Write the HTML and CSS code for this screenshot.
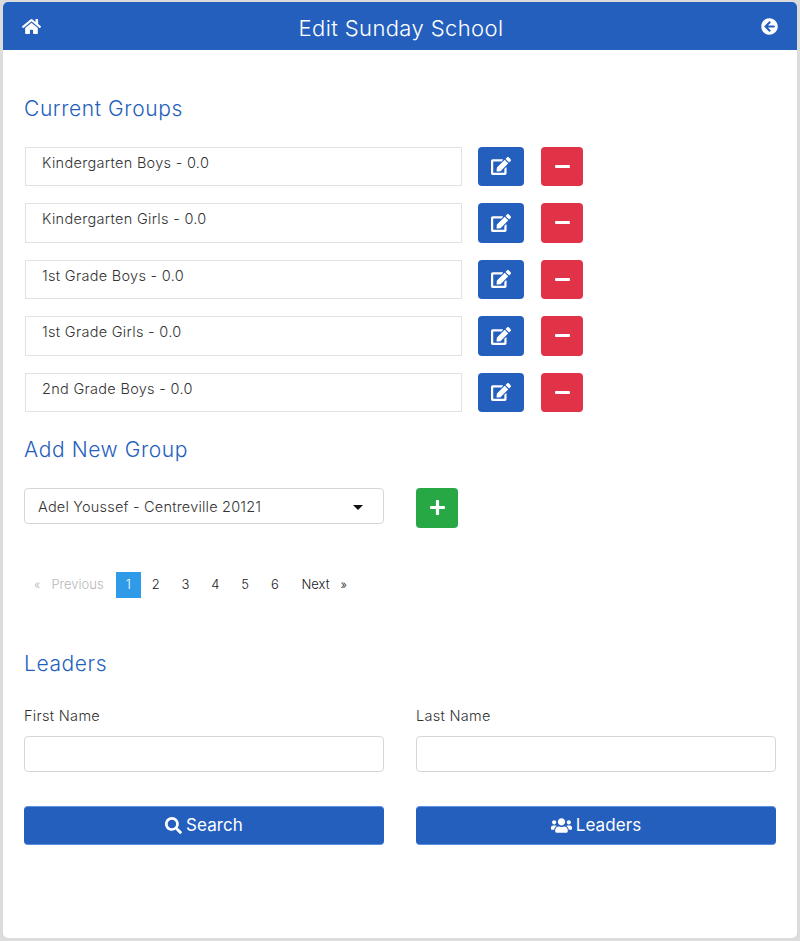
FILE: index.html
```html
<!DOCTYPE html>
<html lang="en">
<head>
<meta charset="utf-8">
<title>Edit Sunday School</title>
<link rel="stylesheet" href="styles.css">
</head>
<body>
<svg class="defs" aria-hidden="true">
  <symbol id="i-home" viewBox="0 0 576 512"><path d="M280.37 148.26L96 300.11V464a16 16 0 0 0 16 16l112.06-.29a16 16 0 0 0 15.92-16V368a16 16 0 0 1 16-16h64a16 16 0 0 1 16 16v95.64a16 16 0 0 0 16 16.05L464 480a16 16 0 0 0 16-16V300L295.67 148.26a12.19 12.19 0 0 0-15.3 0zM571.6 251.47L488 182.56V44.05a12 12 0 0 0-12-12h-56a12 12 0 0 0-12 12v72.61L318.47 43a48 48 0 0 0-61 0L4.34 251.47a12 12 0 0 0-1.6 16.9l25.5 31A12 12 0 0 0 45.15 301l235.22-193.74a12.19 12.19 0 0 1 15.3 0L530.9 301a12 12 0 0 0 16.9-1.6l25.5-31a12 12 0 0 0-1.7-16.93z"/></symbol>
  <symbol id="i-back" viewBox="0 0 512 512"><path d="M256 504C119 504 8 393 8 256S119 8 256 8s248 111 248 248-111 248-248 248zm28.9-143.6L209.4 288H392c13.3 0 24-10.7 24-24v-16c0-13.3-10.7-24-24-24H209.4l75.5-72.4c9.7-9.3 9.9-24.8.4-34.3l-11-10.9c-9.4-9.4-24.6-9.4-33.9 0L107.7 239c-9.4 9.4-9.4 24.6 0 33.9l132.7 132.7c9.4 9.4 24.6 9.4 33.9 0l11-10.9c9.5-9.5 9.3-25-.4-34.3z"/></symbol>
  <symbol id="i-edit" viewBox="0 0 576 512"><path d="M402.6 83.2l90.2 90.2c3.8 3.8 3.8 10 0 13.8L274.4 405.6l-92.8 10.3c-12.4 1.4-22.9-9.1-21.5-21.5l10.3-92.8L388.8 83.2c3.8-3.8 10-3.8 13.8 0zm162-22.9l-48.8-48.8c-15.2-15.2-39.9-15.2-55.2 0l-35.4 35.4c-3.8 3.8-3.8 10 0 13.8l90.2 90.2c3.8 3.8 10 3.8 13.8 0l35.4-35.4c15.2-15.3 15.2-40 0-55.2zM384 346.2V448H64V128h229.8c3.2 0 6.2-1.3 8.5-3.5l40-40c7.6-7.6 2.2-20.5-8.5-20.5H48C21.5 64 0 85.5 0 112v352c0 26.5 21.5 48 48 48h352c26.5 0 48-21.5 48-48V306.2c0-10.7-12.9-16-20.5-8.5l-40 40c-2.2 2.3-3.5 5.3-3.5 8.5z"/></symbol>
  <symbol id="i-minus" viewBox="0 0 448 512"><path d="M416 208H32c-17.67 0-32 14.33-32 32v32c0 17.67 14.33 32 32 32h384c17.67 0 32-14.33 32-32v-32c0-17.67-14.33-32-32-32z"/></symbol>
  <symbol id="i-plus" viewBox="0 0 448 512"><path d="M416 208H272V64c0-17.67-14.33-32-32-32h-32c-17.67 0-32 14.33-32 32v144H32c-17.67 0-32 14.33-32 32v32c0 17.67 14.33 32 32 32h144v144c0 17.67 14.33 32 32 32h32c17.67 0 32-14.33 32-32V304h144c17.67 0 32-14.33 32-32v-32c0-17.67-14.33-32-32-32z"/></symbol>
  <symbol id="i-search" viewBox="0 0 512 512"><path d="M505 442.7L405.3 343c-4.5-4.5-10.6-7-17-7H372c27.6-35.3 44-79.7 44-128C416 93.1 322.9 0 208 0S0 93.1 0 208s93.1 208 208 208c48.3 0 92.7-16.4 128-44v16.3c0 6.4 2.5 12.5 7 17l99.7 99.7c9.4 9.4 24.6 9.4 33.9 0l28.3-28.3c9.4-9.4 9.4-24.6.1-34zM208 336c-70.7 0-128-57.2-128-128 0-70.7 57.2-128 128-128 70.7 0 128 57.2 128 128 0 70.7-57.2 128-128 128z"/></symbol>
  <symbol id="i-users" viewBox="0 0 640 512"><path d="M96 224c35.3 0 64-28.7 64-64s-28.7-64-64-64-64 28.7-64 64 28.7 64 64 64zm448 0c35.3 0 64-28.7 64-64s-28.7-64-64-64-64 28.7-64 64 28.7 64 64 64zm32 32h-64c-17.6 0-33.5 7.1-45.1 18.6 40.3 22.1 68.9 62 75.1 109.4h66c17.7 0 32-14.3 32-32v-32c0-35.3-28.7-64-64-64zm-256 0c61.9 0 112-50.1 112-112S381.9 32 320 32 208 82.1 208 144s50.1 112 112 112zm76.8 32h-8.3c-20.8 10-43.9 16-68.5 16s-47.6-6-68.5-16h-8.3C179.6 288 128 339.6 128 403.2V432c0 26.5 21.5 48 48 48h288c26.5 0 48-21.5 48-48v-28.8c0-63.6-51.6-115.2-115.2-115.2zm-223.7-13.4C161.5 263.1 145.6 256 128 256H64c-35.3 0-64 28.7-64 64v32c0 17.7 14.3 32 32 32h65.9c6.3-47.4 34.9-87.3 75.2-109.4z"/></symbol>
</svg>

<main class="card">
  <header class="topbar">
    <a class="topbar-link" href="#" aria-label="Home"><svg class="icon icon-home"><use href="#i-home"/></svg></a>
    <h1 class="topbar-title">Edit Sunday School</h1>
    <a class="topbar-link" href="#" aria-label="Back"><svg class="icon icon-back"><use href="#i-back"/></svg></a>
  </header>

  <div class="content">
    <h2 class="section-title section-current">Current Groups</h2>
    <ul class="group-list">
      <li class="group-row">
        <div class="group-name">Kindergarten Boys - 0.0</div>
        <button class="btn btn-blue btn-edit" aria-label="Edit"><svg class="icon icon-edit"><use href="#i-edit"/></svg></button>
        <button class="btn btn-red btn-square" aria-label="Remove"><svg class="icon icon-sign"><use href="#i-minus"/></svg></button>
      </li>
      <li class="group-row">
        <div class="group-name">Kindergarten Girls - 0.0</div>
        <button class="btn btn-blue btn-edit" aria-label="Edit"><svg class="icon icon-edit"><use href="#i-edit"/></svg></button>
        <button class="btn btn-red btn-square" aria-label="Remove"><svg class="icon icon-sign"><use href="#i-minus"/></svg></button>
      </li>
      <li class="group-row">
        <div class="group-name">1st Grade Boys - 0.0</div>
        <button class="btn btn-blue btn-edit" aria-label="Edit"><svg class="icon icon-edit"><use href="#i-edit"/></svg></button>
        <button class="btn btn-red btn-square" aria-label="Remove"><svg class="icon icon-sign"><use href="#i-minus"/></svg></button>
      </li>
      <li class="group-row">
        <div class="group-name">1st Grade Girls - 0.0</div>
        <button class="btn btn-blue btn-edit" aria-label="Edit"><svg class="icon icon-edit"><use href="#i-edit"/></svg></button>
        <button class="btn btn-red btn-square" aria-label="Remove"><svg class="icon icon-sign"><use href="#i-minus"/></svg></button>
      </li>
      <li class="group-row">
        <div class="group-name">2nd Grade Boys - 0.0</div>
        <button class="btn btn-blue btn-edit" aria-label="Edit"><svg class="icon icon-edit"><use href="#i-edit"/></svg></button>
        <button class="btn btn-red btn-square" aria-label="Remove"><svg class="icon icon-sign"><use href="#i-minus"/></svg></button>
      </li>
    </ul>

    <h2 class="section-title section-add">Add New Group</h2>
    <div class="two-col add-row">
      <div class="select-box">
        <span class="select-text">Adel Youssef - Centreville 20121</span>
        <span class="select-caret"></span>
      </div>
      <div><button class="btn btn-green btn-square" aria-label="Add"><svg class="icon icon-sign"><use href="#i-plus"/></svg></button></div>
    </div>

    <nav class="pager">
      <span class="page-edge page-disabled"><span class="quote">«</span>Previous</span>
      <span class="page-num page-current">1</span>
      <a class="page-num" href="#">2</a>
      <a class="page-num" href="#">3</a>
      <a class="page-num" href="#">4</a>
      <a class="page-num" href="#">5</a>
      <a class="page-num" href="#">6</a>
      <a class="page-edge page-next" href="#">Next<span class="quote">»</span></a>
    </nav>

    <h2 class="section-title section-leaders">Leaders</h2>
    <div class="two-col field-row">
      <label class="field"><span class="field-label">First Name</span><input class="field-input" type="text"></label>
      <label class="field"><span class="field-label">Last Name</span><input class="field-input" type="text"></label>
    </div>
    <div class="two-col action-row">
      <button class="btn btn-blue btn-wide"><svg class="icon icon-search"><use href="#i-search"/></svg>Search</button>
      <button class="btn btn-blue btn-wide"><svg class="icon icon-users"><use href="#i-users"/></svg>Leaders</button>
    </div>
  </div>
</main>
</body>
</html>
```

FILE: styles.css
```css
* { box-sizing: border-box; }

html, body { height: 100%; }

body {
  margin: 0;
  padding: 2px 3px 3px;
  background: #dcdcdc;
  font-family: Inter, "Open Sans", sans-serif;
  color: #333;
}

.defs { display: none; }

.icon { fill: currentColor; display: block; flex: none; }

.card {
  height: 936px;
  background: #fff;
  border-radius: 5px;
  overflow: hidden;
}

.topbar {
  height: 48px;
  background: #255fbd;
  color: #fff;
  display: flex;
  align-items: center;
  justify-content: space-between;
  padding: 0 19px;
}

.topbar-link { color: #fff; display: block; }
.icon-home { width: 19px; height: 17px; }
.icon-back { width: 17px; height: 17px; }

.topbar-title {
  margin: 3px 0 0;
  font-size: 22px;
  line-height: 30px;
  font-weight: 300;
  letter-spacing: 0.4px;
}

.content { padding: 0 21px; }

.section-title {
  margin: 0;
  font-size: 21px;
  line-height: 26px;
  font-weight: 300;
  color: #255fbd;
  letter-spacing: 0.6px;
}

.section-current { padding-top: 46px; }
.section-add { margin-top: 25.4px; }
.section-leaders { margin-top: 53px; }

.group-list {
  list-style: none;
  margin: 24.6px 0 0;
  padding: 0;
  display: flex;
  flex-direction: column;
  gap: 17px;
}

.group-row {
  height: 39.5px;
  display: flex;
  align-items: flex-start;
}

.group-name {
  width: 437px;
  height: 39.5px;
  margin-left: 1px;
  margin-right: 16px;
  padding: 5px 16px 0;
  border: 1px solid #e2e2e2;
  font-size: 14.5px;
  line-height: 20px;
  font-weight: 300;
  color: #333;
  letter-spacing: 0.3px;
}

.btn {
  border: 0;
  border-radius: 4px;
  color: #fff;
  font-family: inherit;
  padding: 0;
  display: flex;
  align-items: center;
  justify-content: center;
}

.btn-blue { background: #255fbd; }
.btn-red { background: #e03347; }
.btn-green { background: #28a745; }

.btn-edit { width: 46px; height: 39.5px; margin-right: 17px; }
.btn-square { width: 42px; height: 39.5px; }

.icon-edit { width: 20px; height: 18px; }
.icon-sign { width: 15px; height: 17px; }

.two-col {
  display: grid;
  grid-template-columns: 360px 360px;
  column-gap: 32px;
}

.add-row { margin-top: 24.6px; }

.select-box {
  height: 36px;
  border: 1px solid #d4d7da;
  border-radius: 4px;
  display: flex;
  align-items: center;
  justify-content: space-between;
  padding: 0 20px 0 13px;
}

.select-text { font-size: 14.5px; font-weight: 300; color: #333; letter-spacing: 0.2px; }

.select-caret {
  width: 0;
  height: 0;
  margin-top: 2px;
  border-left: 5px solid transparent;
  border-right: 5px solid transparent;
  border-top: 5px solid #111;
}

.pager {
  margin-top: 44.4px;
  height: 26px;
  display: flex;
  align-items: center;
  font-size: 13px;
  font-weight: 300;
  color: #222;
  padding-left: 10px;
}

.page-edge { display: flex; align-items: center; padding-bottom: 1px; }
.page-disabled { color: #b8b8b8; width: 82px; }
.page-disabled .quote { margin-right: 11px; }
.page-next { color: #222; text-decoration: none; margin-left: 9px; }
.page-next .quote { margin-left: 11px; }
.quote { font-size: 12px; }

.page-num {
  min-width: 24.5px;
  height: 26px;
  margin-right: 5.3px;
  padding-bottom: 1px;
  display: flex;
  align-items: center;
  justify-content: center;
  color: #222;
  text-decoration: none;
}

.page-current { background: #2f9be8; color: #fff; margin-right: 3px; }

.field-row { margin-top: 29px; }

.field { display: block; }

.field-label {
  display: block;
  font-size: 14.5px;
  line-height: 20px;
  font-weight: 300;
  color: #333;
  letter-spacing: 0.3px;
}

.field-input {
  display: block;
  width: 100%;
  height: 36px;
  margin-top: 10px;
  border: 1px solid #d4d7da;
  border-radius: 4px;
  background: #fff;
}

.action-row { margin-top: 34px; }

.btn-wide {
  height: 39px;
  gap: 4px;
  font-size: 17px;
  font-weight: 400;
  letter-spacing: 0.1px;
  border-style: solid;
  border-width: 1px 0;
  border-color: #5a93e4;
}

.icon-search { width: 17px; height: 17px; }
.icon-users { width: 21px; height: 17px; }
```
